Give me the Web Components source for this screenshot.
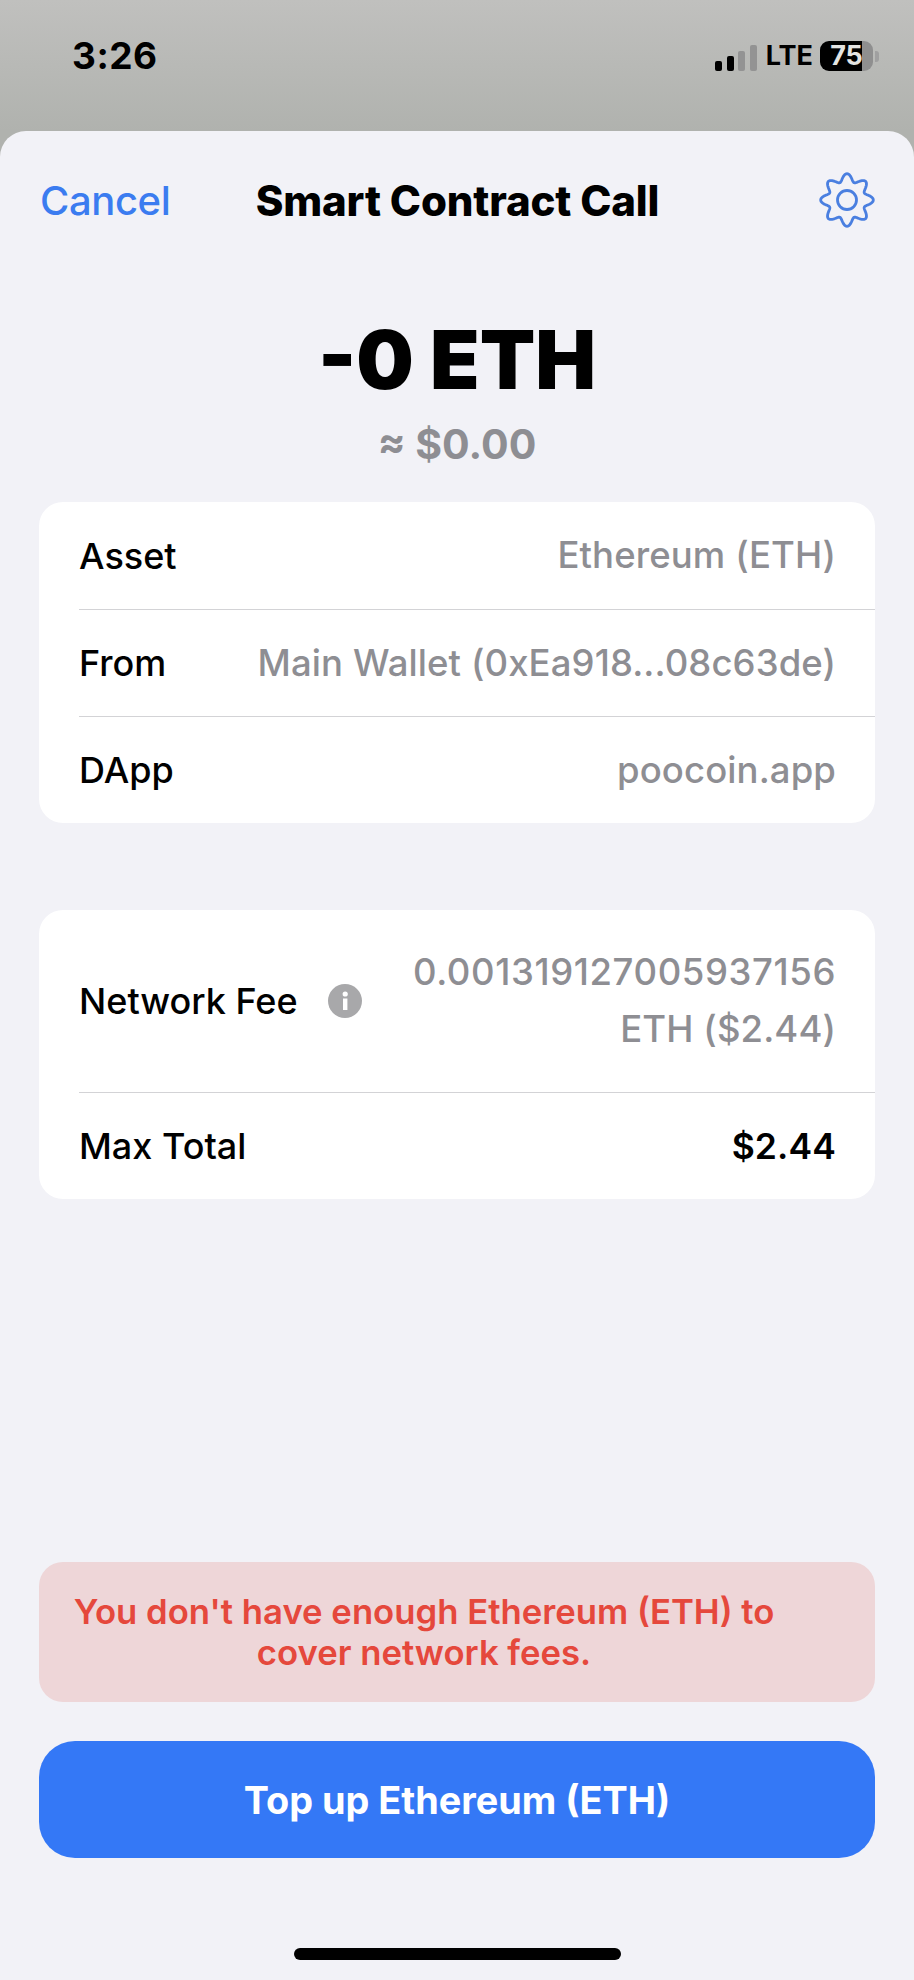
<!DOCTYPE html>
<html>
<head>
<meta charset="utf-8">
<style>
  html, body { margin: 0; padding: 0; }
  body { width: 914px; height: 1980px; overflow: hidden; font-family: Inter, "Liberation Sans", sans-serif; background: #bfbfbd; }
  .digits { letter-spacing: 0.6px; }
</style>
</head>
<body>
<wallet-screen>
  <status-bar slot="status" time="3:26" battery="75"></status-bar>
  <nav-bar title="Smart Contract Call" action="Cancel"></nav-bar>
  <amount-header amount="-0 ETH" fiat="≈ $0.00"></amount-header>
  <info-card class="first">
    <info-row label="Asset">Ethereum (ETH)</info-row>
    <info-row label="From" divider>Main Wallet (0xEa918...08c63de)</info-row>
    <info-row label="DApp" divider>poocoin.app</info-row>
  </info-card>
  <info-card class="second">
    <info-row label="Network Fee" info tall><span class="digits">0.001319127005937156</span><br>ETH ($2.44)</info-row>
    <info-row label="Max Total" divider strong>$2.44</info-row>
  </info-card>
  <alert-box slot="footer">You don't have enough Ethereum (ETH) to<br>cover network fees.</alert-box>
  <primary-button slot="footer">Top up Ethereum (ETH)</primary-button>
  <home-indicator slot="footer"></home-indicator>
</wallet-screen>

<script>
class WalletScreen extends HTMLElement {
    constructor() {
        super();
        this.attachShadow({ mode: 'open' });
        this.shadowRoot.innerHTML = `
      <style>
        :host {
          display: flex;
          flex-direction: column;
          width: 914px;
          height: 1980px;
          background: linear-gradient(#c0c0be, #b0b2ae 131px);
        }
        .sheet {
          flex: 1;
          display: flex;
          flex-direction: column;
          background: #f2f2f7;
          border-radius: 26px 26px 0 0;
          min-height: 0;
        }
        .main { display: flex; flex-direction: column; flex: 1; }
        .footer { display: flex; flex-direction: column; }
      </style>
      <slot name="status"></slot>
      <div class="sheet">
        <div class="main"><slot></slot></div>
        <div class="footer"><slot name="footer"></slot></div>
      </div>
    `;
    }
}

class StatusBar extends HTMLElement {
    constructor() {
        super();
        this.attachShadow({ mode: 'open' });
        this.shadowRoot.innerHTML = `
      <style>
        :host {
          display: flex;
          box-sizing: border-box;
          height: 131px;
          padding: 36px 35px 0 72px;
          justify-content: space-between;
          align-items: flex-start;
          color: #000;
          font-family: Inter, "Liberation Sans", sans-serif;
        }
        .time { font-size: 37px; font-weight: 700; line-height: 40px; letter-spacing: 0.5px; }
        .right { display: flex; align-items: center; height: 36px; margin-top: 2px; }
        .bars { display: flex; align-items: flex-end; gap: 4.5px; height: 27px; margin-top: 2px; }
        .bars i { display: block; width: 7px; border-radius: 2px; background: #000; }
        .bars i.off { background: #939393; }
        .lte { font-size: 27px; font-weight: 700; line-height: 36px; margin-left: 9px; }
        .battery {
          display: flex; align-items: center; justify-content: center;
          box-sizing: border-box;
          position: relative;
          width: 53px; height: 30px; margin-left: 7px;
          border-radius: 9px;
          background: linear-gradient(90deg, #000 42px, #8f8f8f 42px);
          color: #e4e4e2;
          font-size: 27px; font-weight: 700; line-height: 30px;
        }
        .tip { width: 4px; height: 11px; margin-left: 2px; border-radius: 0 3px 3px 0; background: #a0a0a0; }
      </style>
      <div class="time"></div>
      <div class="right">
        <div class="bars">
          <i style="height:10px"></i><i style="height:15px"></i>
          <i class="off" style="height:20px"></i><i class="off" style="height:26px"></i>
        </div>
        <div class="lte">LTE</div>
        <div class="battery"></div>
        <div class="tip"></div>
      </div>
    `;
    }

    connectedCallback() {
        this.shadowRoot.querySelector('.time').textContent = this.getAttribute('time') || '';
        this.shadowRoot.querySelector('.battery').textContent = this.getAttribute('battery') || '';
    }
}

class NavBar extends HTMLElement {
    constructor() {
        super();
        this.attachShadow({ mode: 'open' });
        this.shadowRoot.innerHTML = `
      <style>
        :host {
          display: grid;
          grid-template-columns: 1fr auto 1fr;
          align-items: center;
          box-sizing: border-box;
          height: 138px;
          padding: 0 39px 0 40px;
          font-family: Inter, "Liberation Sans", sans-serif;
        }
        .action { font-size: 40px; font-weight: 500; color: #3b7cf0; letter-spacing: -0.4px; }
        .title { font-size: 42px; font-weight: 800; color: #000; letter-spacing: -0.15px; white-space: nowrap; }
        svg { justify-self: end; display: block; }
      </style>
      <div class="action"></div>
      <div class="title"></div>
      <svg width="56" height="56" viewBox="-28 -28 56 56" fill="none" stroke="#4a7fe0" stroke-width="2.8">
        <path class="gear" stroke-linejoin="round"></path>
        <circle r="9.5"></circle>
      </svg>
    `;
    }

    connectedCallback() {
        this.shadowRoot.querySelector('.action').textContent = this.getAttribute('action') || '';
        this.shadowRoot.querySelector('.title').textContent = this.getAttribute('title') || '';
        // eight soft lobes, one pointing straight up
        let d = '';
        for (let i = 0; i < 240; i++) {
            const a = (i / 240) * Math.PI * 2;
            const r = 22.5 + 3.8 * Math.cos(8 * a);
            const x = (r * Math.sin(a)).toFixed(2);
            const y = (-r * Math.cos(a)).toFixed(2);
            d += (i ? 'L' : 'M') + x + ' ' + y;
        }
        this.shadowRoot.querySelector('.gear').setAttribute('d', d + 'Z');
    }
}

class AmountHeader extends HTMLElement {
    constructor() {
        super();
        this.attachShadow({ mode: 'open' });
        this.shadowRoot.innerHTML = `
      <style>
        :host {
          display: flex;
          flex-direction: column;
          align-items: center;
          box-sizing: border-box;
          height: 233px;
          font-family: Inter, "Liberation Sans", sans-serif;
        }
        .amount { font-size: 81px; font-weight: 900; line-height: 90px; margin-top: 46px; color: #000; }
        .fiat { font-size: 41px; font-weight: 700; line-height: 46px; margin-top: 16px; color: #8e8e93; }
      </style>
      <div class="amount"></div>
      <div class="fiat"></div>
    `;
    }

    connectedCallback() {
        this.shadowRoot.querySelector('.amount').textContent = this.getAttribute('amount') || '';
        this.shadowRoot.querySelector('.fiat').textContent = this.getAttribute('fiat') || '';
    }
}

class InfoCard extends HTMLElement {
    constructor() {
        super();
        this.attachShadow({ mode: 'open' });
        this.shadowRoot.innerHTML = `
      <style>
        :host {
          display: block;
          margin: 0 39px;
          background: #fff;
          border-radius: 24px;
          overflow: hidden;
        }
        :host(.second) { margin-top: 87px; }
      </style>
      <slot></slot>
    `;
    }
}

class InfoRow extends HTMLElement {
    constructor() {
        super();
        this.attachShadow({ mode: 'open' });
        this.shadowRoot.innerHTML = `
      <style>
        :host {
          display: block;
          font-family: Inter, "Liberation Sans", sans-serif;
          font-size: 36px;
        }
        .row {
          display: flex;
          justify-content: space-between;
          align-items: center;
          box-sizing: border-box;
          height: 107px;
          margin-left: 40px;
          padding-right: 39px;
        }
        :host([divider]) .row { border-top: 1px solid #d3d3d6; }
        :host([tall]) .row { height: 182px; }
        .label { display: flex; align-items: center; gap: 30px; font-weight: 500; color: #000; white-space: nowrap; }
        .value { font-size: 36.5px; font-weight: 500; color: #8e8e93; text-align: right; line-height: 57px; white-space: nowrap; letter-spacing: 0.1px; }
        :host([strong]) .value { color: #000; font-weight: 600; font-size: 35.5px; }
        svg { display: none; }
        :host([info]) svg { display: block; }
      </style>
      <div class="row">
        <div class="label">
          <span class="text"></span>
          <svg width="34" height="34" viewBox="0 0 34 34">
            <circle cx="17" cy="17" r="17" fill="#a8a8aa"></circle>
            <rect x="15" y="14.5" width="4.4" height="11.5" fill="#fff"></rect>
            <circle cx="17.2" cy="10" r="2.6" fill="#fff"></circle>
          </svg>
        </div>
        <div class="value"><slot></slot></div>
      </div>
    `;
    }

    connectedCallback() {
        this.shadowRoot.querySelector('.text').textContent = this.getAttribute('label') || '';
    }
}

class AlertBox extends HTMLElement {
    constructor() {
        super();
        this.attachShadow({ mode: 'open' });
        this.shadowRoot.innerHTML = `
      <style>
        :host {
          display: flex;
          align-items: center;
          justify-content: center;
          box-sizing: border-box;
          height: 140px;
          margin: 0 39px;
          padding: 0 100px 0 34px;
          background: #eed6d8;
          border-radius: 24px;
          color: #e5483c;
          font-family: Inter, "Liberation Sans", sans-serif;
          font-size: 34.7px;
          font-weight: 600;
          line-height: 41px;
          text-align: center;
          white-space: nowrap;
        }
      </style>
      <slot></slot>
    `;
    }
}

class PrimaryButton extends HTMLElement {
    constructor() {
        super();
        this.attachShadow({ mode: 'open' });
        this.shadowRoot.innerHTML = `
      <style>
        :host {
          display: flex;
          align-items: center;
          justify-content: center;
          height: 117px;
          margin: 39px 39px 0;
          background: #3478f6;
          border-radius: 36px;
          color: #fff;
          font-family: Inter, "Liberation Sans", sans-serif;
          font-size: 37.8px;
          font-weight: 700;
        }
      </style>
      <slot></slot>
    `;
    }
}

class HomeIndicator extends HTMLElement {
    constructor() {
        super();
        this.attachShadow({ mode: 'open' });
        this.shadowRoot.innerHTML = `
      <style>
        :host { display: flex; justify-content: center; padding: 90px 0 20px; }
        div { width: 327px; height: 12px; border-radius: 6px; background: #000; }
      </style>
      <div></div>
    `;
    }
}

customElements.define('wallet-screen', WalletScreen);
customElements.define('status-bar', StatusBar);
customElements.define('nav-bar', NavBar);
customElements.define('amount-header', AmountHeader);
customElements.define('info-card', InfoCard);
customElements.define('info-row', InfoRow);
customElements.define('alert-box', AlertBox);
customElements.define('primary-button', PrimaryButton);
customElements.define('home-indicator', HomeIndicator);
</script>
</body>
</html>
